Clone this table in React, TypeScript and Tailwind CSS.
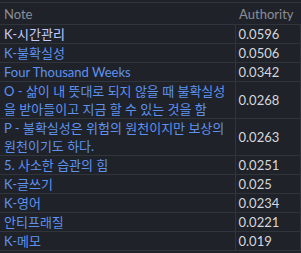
const rows: { note: string; value: string; active?: boolean }[] = [
  { note: "K-시간관리", value: "0.0596", active: true },
  { note: "K-불확실성", value: "0.0506" },
  { note: "Four Thousand Weeks", value: "0.0342" },
  { note: "O - 삶이 내 뜻대로 되지 않을 때 불확실성을 받아들이고 지금 할 수 있는 것을 함", value: "0.0268" },
  { note: "P - 불확실성은 위험의 원천이지만 보상의 원천이기도 하다.", value: "0.0263" },
  { note: "5. 사소한 습관의 힘", value: "0.0251" },
  { note: "K-글쓰기", value: "0.025" },
  { note: "K-영어", value: "0.0234" },
  { note: "안티프래질", value: "0.0221" },
  { note: "K-메모", value: "0.019" },
];

export default function App() {
  return (
    <div
      className="w-[301px] h-[253px] overflow-hidden bg-[#1f2228] pt-[2px] text-[13px] leading-[18px]"
      style={{ fontFamily: 'Lato, "Noto Sans CJK KR", sans-serif' }}
    >
      <table className="w-full border-collapse table-fixed">
        <colgroup>
          <col className="w-[235px]" />
          <col />
        </colgroup>
        <thead>
          <tr className="border-t border-b border-[#30343b]">
            <th className="h-[22px] px-[4px] text-left font-normal text-[#8a8f98]">Note</th>
            <th className="h-[22px] pr-[7px] text-right font-normal text-[#8a8f98]">Authority</th>
          </tr>
        </thead>
        <tbody>
          {rows.map((r) => (
            <tr key={r.note} className="border-b border-[#30343b]">
              <td className="px-[4px] py-0 align-middle">
                <span className={r.active ? "text-[#c3cbff]" : "text-[#5e92f0]"}>{r.note}</span>
              </td>
              <td className="border-l border-r border-[#30343b] pl-[3px] py-0 align-middle text-[#d5d8de]">
                {r.value}
              </td>
            </tr>
          ))}
        </tbody>
      </table>
    </div>
  );
}
